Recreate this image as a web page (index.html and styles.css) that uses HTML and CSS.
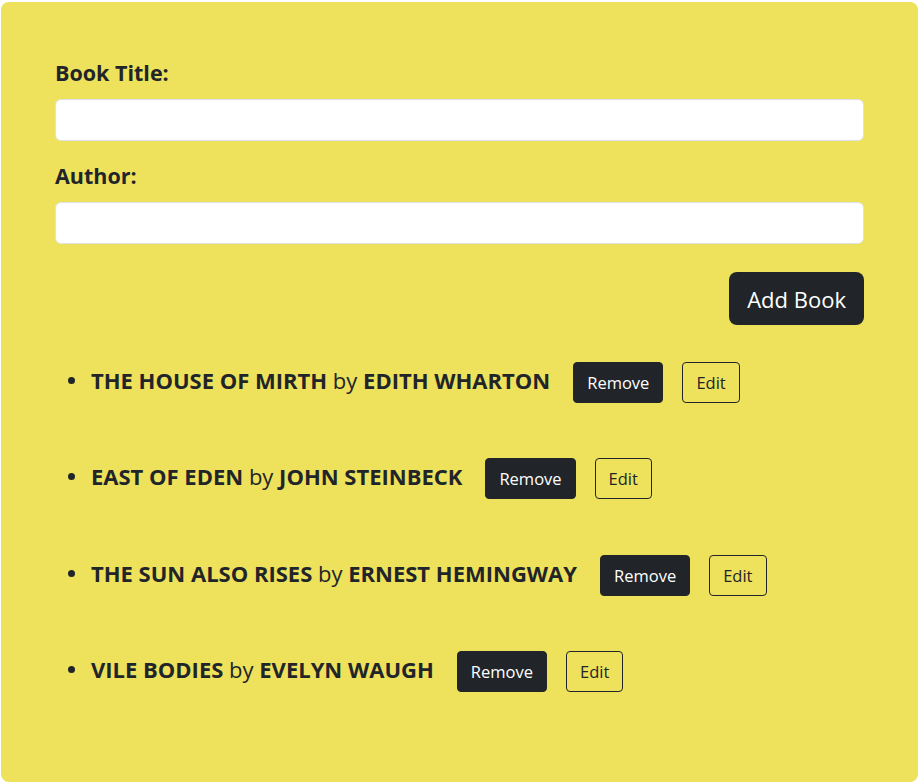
FILE: index.html
```html
<!DOCTYPE html>
<html>
<head>
<meta charset="utf-8">
<link rel="stylesheet" href="styles.css">
</head>
<body>
<div class="card">
  <form class="form">
    <label class="label" for="title">Book Title:</label>
    <input class="input" id="title" type="text">
    <label class="label" for="author">Author:</label>
    <input class="input" id="author" type="text">
    <div class="actions"><button type="button" class="btn-add">Add Book</button></div>
  </form>
  <ul class="list">
    <li class="item"><span class="text"><b>THE HOUSE OF MIRTH</b> by <b>EDITH WHARTON</b></span><button class="btn-remove">Remove</button><button class="btn-edit">Edit</button></li>
    <li class="item"><span class="text"><b>EAST OF EDEN</b> by <b>JOHN STEINBECK</b></span><button class="btn-remove">Remove</button><button class="btn-edit">Edit</button></li>
    <li class="item"><span class="text"><b>THE SUN ALSO RISES</b> by <b>ERNEST HEMINGWAY</b></span><button class="btn-remove">Remove</button><button class="btn-edit">Edit</button></li>
    <li class="item"><span class="text"><b>VILE BODIES</b> by <b>EVELYN WAUGH</b></span><button class="btn-remove">Remove</button><button class="btn-edit">Edit</button></li>
  </ul>
</div>
</body>
</html>
```
FILE: styles.css
```css
html, body { margin: 0; padding: 0; background: #ffffff; }
body { font-family: "Open Sans", "Noto Sans", sans-serif; color: #212529; }
.card {
  margin: 2px 1px 1px 1px;
  height: 780px;
  box-sizing: border-box;
  background: #eee15b;
  border-radius: 8px;
  padding: 56px 54px 0 54px;
}
.form { display: flex; flex-direction: column; }
.label { font-size: 21.5px; font-weight: 700; line-height: 30px; margin-bottom: 11px; }
.input {
  height: 42px; box-sizing: border-box; border: 1px solid #dee2e6; border-radius: 6px;
  background: #fff; margin: 0 0 20px 0; padding: 6px 12px; font-size: 16px;
}
.actions { display: flex; justify-content: flex-end; margin-top: 8px; }
.btn-add {
  height: 53px; padding: 0 18px; background: #212529; color: #fff; border: none;
  border-radius: 8px; font-family: inherit; font-size: 22px;
}
.list { margin: 37px 0 0 0; padding: 0 0 0 36px; }
.item { display: flex; align-items: center; gap: 19px; height: 41px; margin-bottom: 55.3px; font-size: 22px; position: relative; }
.item::before { content: ""; position: absolute; left: -23px; top: 50%; width: 7px; height: 7px; margin-top: -5.5px; border-radius: 50%; background: #212529; }
.text { margin-bottom: 5px; margin-right: 4px; }
.text b { font-weight: 700; }
.btn-remove {
  height: 41px; padding: 0 13px; background: #212529; color: #fff; border: 1px solid #212529;
  border-radius: 4px; font-family: inherit; font-size: 16.5px;
}
.btn-edit {
  height: 41px; padding: 0 13px; background: transparent; color: #212529; border: 1px solid #212529;
  border-radius: 4px; font-family: inherit; font-size: 16.5px;
}
```
